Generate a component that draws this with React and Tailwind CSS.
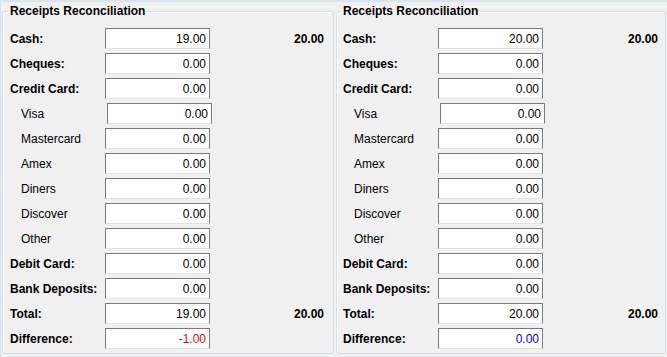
const ROWS = [
  { label: 'Cash:', bold: true, key: 'cash', total: true },
  { label: 'Cheques:', bold: true, key: 'cheques' },
  { label: 'Credit Card:', bold: true, key: 'credit' },
  { label: 'Visa', key: 'visa', sub: true, shift: true },
  { label: 'Mastercard', key: 'mastercard', sub: true },
  { label: 'Amex', key: 'amex', sub: true },
  { label: 'Diners', key: 'diners', sub: true },
  { label: 'Discover', key: 'discover', sub: true },
  { label: 'Other', key: 'other', sub: true },
  { label: 'Debit Card:', bold: true, key: 'debit' },
  { label: 'Bank Deposits:', bold: true, key: 'bank' },
  { label: 'Total:', bold: true, key: 'total', total: true },
  { label: 'Difference:', bold: true, key: 'diff', diff: true },
];

const PANELS = [
  { cash: '19.00', total: '19.00', diff: '-1.00', diffColor: 'text-[#ff0000]', expected: '20.00', cls: 'w-[332px] pl-[7px] pr-[8px]' },
  { cash: '20.00', total: '20.00', diff: '0.00', diffColor: 'text-[#0000ff]', expected: '20.00', cls: 'w-[330px] pl-[6px] pr-[6px]' },
];

function Panel({ p }) {
  const valueOf = (key) => {
    if (key === 'cash') return p.cash;
    if (key === 'total') return p.total;
    if (key === 'diff') return p.diff;
    return '0.00';
  };

  return (
    <fieldset className={`${p.cls} mt-[2px] h-[350px] border border-[#d5dfe5] rounded-[3px] shadow-[inset_1px_1px_0_#ffffff]`}>
      <legend className="-ml-[2px] px-[2px] font-bold text-[12px] leading-[14px] text-black">
        Receipts Reconciliation
      </legend>
      <div className="flex flex-col pt-[8px]">
        {ROWS.map((r) => (
          <div key={r.key} className="flex items-center h-[25px]">
            <div className={`w-[95px] shrink-0 text-[12px] text-black ${r.bold ? 'font-bold' : ''} ${r.sub ? 'pl-[11px]' : ''}`}>
              {r.label}
            </div>
            <div
              className={`w-[105px] h-[21px] shrink-0 bg-white border border-[#7a7a7a] border-b-[#e3e3e3] flex items-center justify-end pr-[3px] text-[12px] ${r.shift ? 'ml-[2px]' : ''} ${r.diff ? p.diffColor : 'text-black'}`}
            >
              {valueOf(r.key)}
            </div>
            <div className="flex-1 text-right font-bold text-[12px] text-black pr-[1px]">
              {r.total ? p.expected : ''}
            </div>
          </div>
        ))}
      </div>
    </fieldset>
  );
}

export default function App() {
  return (
    <div
      className="w-[667px] h-[357px] bg-[#f0f0f0] border-t-2 border-l border-[#d9e3f0] flex gap-[2px] pl-[1px] overflow-hidden"
      style={{ fontFamily: '"Liberation Sans", Arial, sans-serif' }}
    >
      {PANELS.map((p, i) => (
        <Panel key={i} p={p} />
      ))}
    </div>
  );
}
